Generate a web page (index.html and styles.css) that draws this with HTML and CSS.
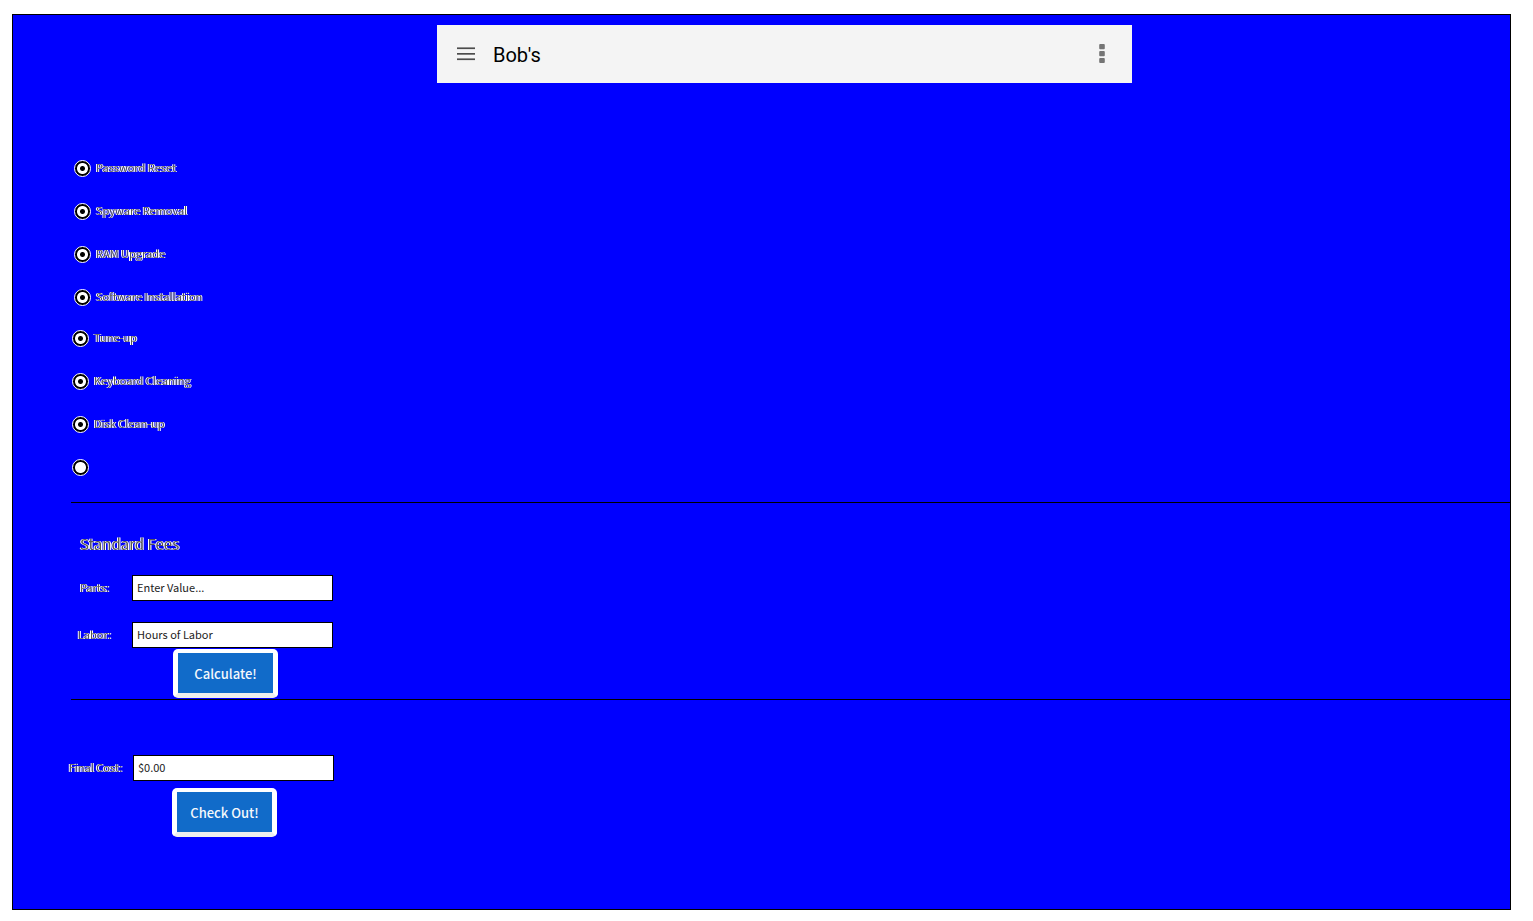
FILE: index.html
```html
<!DOCTYPE html>
<html lang="en">
<head>
<meta charset="utf-8">
<title>Bob's</title>
<link rel="stylesheet" href="styles.css">
</head>
<body>
<div class="frame">
  <header class="topbar">
    <button class="icon-button" type="button" aria-label="Menu">
      <svg width="18" height="14" viewBox="0 0 18 14" fill="#4c4c4c"><rect width="18" height="1.7" y="0.4"/><rect width="18" height="1.7" y="6"/><rect width="18" height="1.7" y="11.4"/></svg>
    </button>
    <h1 class="brand">Bob's</h1>
    <button class="icon-button" type="button" aria-label="More options">
      <svg width="6" height="20" viewBox="0 0 6 20" fill="#757575"><rect width="5.6" height="5.2" x=".2" y=".1" rx="1"/><rect width="5.6" height="5.2" x=".2" y="7" rx="1"/><rect width="5.6" height="5.2" x=".2" y="13.9" rx="1"/></svg>
    </button>
  </header>
  <form>
    <div class="services">
      <label class="service"><input type="radio" name="s1" checked><span class="etched">Password Reset</span></label>
      <label class="service"><input type="radio" name="s2" checked><span class="etched">Spyware Removal</span></label>
      <label class="service"><input type="radio" name="s3" checked><span class="etched">RAM Upgrade</span></label>
      <label class="service"><input type="radio" name="s4" checked><span class="etched">Software Installation</span></label>
    </div>
    <div class="services services-more">
      <label class="service"><input type="radio" name="s5" checked><span class="etched">Tune-up</span></label>
      <label class="service"><input type="radio" name="s6" checked><span class="etched">Keyboard Cleaning</span></label>
      <label class="service"><input type="radio" name="s7" checked><span class="etched">Disk Clean-up</span></label>
      <label class="service"><input type="radio" name="s8" aria-label="Other"></label>
    </div>
    <section class="fees">
      <h2 class="heading etched">Standard Fees</h2>
      <div class="field"><label class="etched" for="parts">Parts:</label><input id="parts" type="text" value="Enter Value..."></div>
      <div class="field"><label class="etched" for="labor">Labor:</label><input id="labor" type="text" value="Hours of Labor"></div>
      <button class="action" type="button">Calculate!</button>
    </section>
    <section class="total">
      <div class="field"><label class="etched" for="cost">Final Cost:</label><input id="cost" type="text" value="$0.00"></div>
      <button class="action" type="button">Check Out!</button>
    </section>
  </form>
</div>
</body>
</html>
```
FILE: styles.css
```css
* { box-sizing: border-box; }
body {
  margin: 0;
  padding: 14px 22px 11px 12px;
  min-height: 100vh;
  display: flex;
  background: #fff;
  font-family: "Noto Sans CJK SC", "Noto Sans", sans-serif;
  font-size: 11px;
  line-height: 16px;
}
.frame {
  flex: 1;
  padding-top: 10px;
  border: 1px solid #000;
  background: #00f;
}
.topbar {
  display: flex;
  align-items: center;
  gap: 18px;
  max-width: 695px;
  height: 58px;
  margin-left: 424px;
  padding: 0 27px 0 20px;
  background: #f4f4f4;
}
.icon-button {
  display: flex;
  padding: 0;
  border: 0;
  background: none;
}
.brand {
  flex: 1;
  margin: 0;
  padding-top: 2px;
  font: 400 20px/24px Roboto, "Noto Sans", sans-serif;
  color: #000;
}
.etched {
  color: #555;
  text-shadow: 1px 0 #fff, -1px 0 #fff;
  will-change: transform;
}
.services {
  display: flex;
  flex-direction: column;
  align-items: flex-start;
  gap: 26px;
  margin: 77px 0 0 61px;
}
.services-more { margin: 24px 0 26px 59px; }
.service {
  display: flex;
  align-items: center;
  gap: 5px;
  height: 17px;
}
.service .etched { padding-bottom: 3px; }
.service input {
  appearance: none;
  width: 17px;
  height: 17px;
  margin: 0;
  border: 1px solid #fff;
  border-radius: 50%;
  background: radial-gradient(circle, #fff 5px, #000 6px);
}
.service input:checked { background: radial-gradient(circle, #000 2px, #fff 3px, #fff 5px, #000 6px); }
.fees {
  margin-left: 58px;
  padding-top: 29px;
  border-top: 1px solid #000;
  border-bottom: 1px solid #000;
}
.heading {
  margin: 0 0 19px 9px;
  font-size: 15px;
  font-weight: 400;
  line-height: 24px;
}
.field {
  display: flex;
  align-items: center;
  gap: 10px;
  margin-left: -4px;
}
.field + .field { margin-top: 21px; }
.field label {
  width: 55px;
  padding-bottom: 3px;
  text-align: center;
  white-space: nowrap;
}
.field input {
  width: 201px;
  height: 26px;
  padding: 0 4px 2px;
  border: 1px solid #000;
  background: #fff;
  color: #222;
  font: inherit;
}
.action {
  display: block;
  width: 105px;
  height: 49px;
  margin: 1px 0 1px 102px;
  padding: 2px 0 0;
  border: 5px solid #fff;
  border-top-width: 4px;
  border-bottom-color: #eee;
  border-radius: 5px;
  background: #116bc9;
  color: #f4f8fc;
  font: 500 13px/20px "Noto Sans CJK SC", "Noto Sans", sans-serif;
}
.total {
  margin-left: 59px;
  padding-top: 55px;
}
.total .action { margin: 7px 0 0 100px; }
```
